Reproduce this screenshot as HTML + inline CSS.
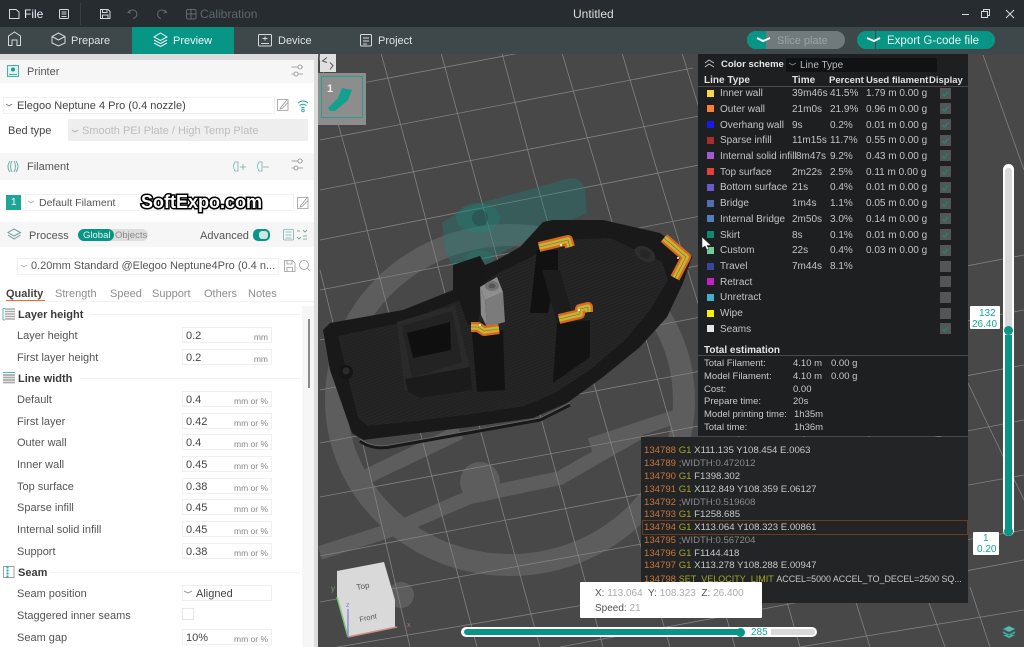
<!DOCTYPE html>
<html><head><meta charset="utf-8"><style>
html,body{margin:0;padding:0;background:#494949}
#r{position:relative;width:1024px;height:647px;overflow:hidden;font-family:"Liberation Sans",sans-serif;font-size:11px;color:#333}
#r div,#r span.t{position:absolute;white-space:nowrap}
.t{line-height:14px;height:14px;margin-top:1px}
.l{color:#555;font-size:11px;margin-top:2px}
.b{position:absolute;left:182px;width:88px;height:14px;margin-top:1px;background:#fff;border:1px solid #f0f0f0}
.v{color:#444;font-size:11px;left:186px;margin-top:2px}
.u{color:#888;font-size:8.500px;right:756px;margin-top:2px}
.sec{font-weight:bold;color:#3a3a3a;font-size:11px;left:18px;margin-top:2px}
.hl{height:1px;background:#f2f2f2}
.lg{color:#c4c4c4;font-size:10px;margin-top:2px}
.w{color:#c9c9c9;font-size:9.500px;margin-top:2px}
.g{font-size:9.600px;color:#c8c8c8;margin-top:2px}
.cb{left:940px;width:11px;height:11px;background:#555}
.sw{left:707px;width:7px;height:7px}
.o{color:#c8763a}.y{color:#a5a52a}.d{color:#8a8a8a}
svg{position:absolute;overflow:visible}
</style></head><body><div id="r">

<!-- viewport -->
<svg style="left:0;top:0" width="1024" height="647" viewBox="0 0 1024 647">
<defs><pattern id="h" width="3" height="3" patternUnits="userSpaceOnUse" patternTransform="rotate(68)"><rect width="3" height="3" fill="#222"/><rect width="1" height="3" fill="#272727"/></pattern></defs>
<rect x="316" y="54" width="708" height="593" fill="#484848"/>
<g fill="none" stroke="#5d5d5d">
<ellipse cx="510" cy="400" rx="174" ry="165" stroke-width="22"/>
<path d="M320 553 L400 527 L470 497 L560 478 L640 432" stroke-width="14"/>
<path d="M355 482 L460 432" stroke-width="15"/>
<path d="M590 445 L690 412" stroke-width="14"/>
</g>
<circle cx="480" cy="482" r="20" fill="#5d5d5d"/>
<circle cx="401" cy="595" r="13" fill="#5d5d5d"/>
<g stroke="#828282" stroke-width=".8" fill="none">
<path d="M320 91 L520 53M320 140 L693 68M320 190 L740 108M320 240 L800 145M320 290 L860 185M320 340 L920 222M320 390 L1024 255M320 443 L1024 310M320 497 L1024 365M320 556 L1024 420M320 602 L1024 475M320 650 L1024 530M560 647 L1024 560M800 647 L1024 610"/>
<path d="M318 53 L354 180 L423 443 L477 647"/>
<path d="M320 270 L362 440 L410 647"/>
<path d="M381 53 L413 170 L483 440 L540 647"/>
<path d="M441 53 L473 170 L547 440 L603 647"/>
<path d="M502 53 L533 170 L610 440 L670 647"/>
<path d="M562 53 L597 170 L675 440 L735 647"/>
<path d="M622 53 L657 170 L740 440 L800 647"/>
<path d="M682 53 L718 170 L805 440 L870 647"/>
<path d="M745 53 L780 170 L870 440 L945 647"/>
<path d="M983 55 L1024 170"/><path d="M968 383 L1024 500"/><path d="M970 587 L990 647"/>
</g>
<!-- ghost -->
<path d="M442 223 L467 207 L570 178 Q582 178 585 190 L587 213 L527 240 L487 260 L453 267 L445 250Z" fill="rgba(25,135,125,.33)"/>
<ellipse cx="478" cy="218" rx="22" ry="15" fill="rgba(25,135,125,.3)"/>
<circle cx="480" cy="218" r="8" fill="rgba(40,70,70,.5)"/>
<ellipse cx="480" cy="258" rx="14" ry="8" fill="rgba(25,135,125,.25)"/>
<!-- skirt -->
<path d="M360 441 Q372 450 390 447 L540 420 L570 405" fill="none" stroke="#191919" stroke-width="3"/>
<path d="M360 439 Q372 448 390 445 L540 418 L570 403" fill="none" stroke="#6a6a6a" stroke-width=".8"/>
<!-- boat -->
<path d="M323 330 L330 323 L403 310 L453 290 L453 265 L480 256 L485 265 L497 260 L520 247 L543 222 L553 220 L603 220 L660 233 L692 257 L683 283 L667 317 L640 347 L603 377 L567 403 L533 418 L470 427 L420 433 L363 440 L352 433 L330 370Z" fill="#191919"/>
<path d="M338 336 L405 322 L460 300 L500 272 L530 258 L560 240 L610 238 L662 262 L668 280 L650 310 L625 340 L590 370 L555 393 L525 406 L465 415 L415 421 L368 426 L358 418Z" fill="url(#h)"/>
<!-- square recess -->
<path d="M397 322 L455 305 L470 370 L415 395 L405 390Z" fill="#2a2a2a"/>
<path d="M402 326 L452 311 L462 362 L412 378Z" fill="#232323"/>
<path d="M407 333 L450 322 L451 350 L413 358Z" fill="#0f0f0f"/>
<path d="M405 379 L470 367 L472 390 L420 398 L408 392Z" fill="#1b1b1b"/>
<circle cx="346" cy="372" r="7" fill="#151515"/><circle cx="346" cy="371" r="3.500" fill="#2b2b2b"/>
<ellipse cx="645" cy="254" rx="11" ry="7" fill="#2e2e2e" transform="rotate(30 645 254)"/><ellipse cx="645" cy="254" rx="6" ry="4" fill="#262626" transform="rotate(30 645 254)"/>
<!-- walls -->
<path d="M453 265 L480 256 L486 280 L480 310 L478 325 L468 325 L459 300Z" fill="#181818"/>
<path d="M472 333 L503 330 L505 390 L477 392Z" fill="#131313"/>
<path d="M537 250 L558 250 L558 270 L548 313 L530 313Z" fill="#111"/>
<path d="M542 270 L560 270 L573 317 L557 323Z" fill="#1c1c1c"/>
<path d="M557 323 L590 320 L590 357 L553 383Z" fill="#131313"/>
<!-- nozzle post -->
<path d="M480 287 L485 300 L487 327 L481 315Z" fill="#8a8a8a"/>
<path d="M485 300 L503 292 L505 322 L487 327Z" fill="#7b7b7b"/>
<path d="M480 287 L497 277 L503 292 L485 300Z" fill="#8e8e8e"/>
<ellipse cx="492" cy="286" rx="7" ry="5" fill="#727272"/><ellipse cx="492" cy="286" rx="3.500" ry="2.500" fill="#555"/>
<!-- orange -->
<g fill="none" stroke-linejoin="round">
<g stroke="#d9691e" stroke-width="10"><path d="M539 247 L568 240 L570 247"/><path d="M559 319 L580 314 L580 309 L588 307 L588 312"/><path d="M471 327 L478 327 L484 331 L499 329"/><path d="M664 238 L686 257 L675 278"/></g>
<g stroke="#c9b23a" stroke-width="5.500"><path d="M539 247 L568 240 L570 247"/><path d="M559 319 L580 314 L580 309 L588 307 L588 312"/><path d="M471 327 L478 327 L484 331 L499 329"/><path d="M664 238 L686 257 L675 278"/></g>
<g stroke="#7a7020" stroke-width=".6"><path d="M539 247 L568 240 L570 247"/><path d="M559 319 L580 314 L580 309 L588 307 L588 312"/><path d="M471 327 L478 327 L484 331 L499 329"/><path d="M664 238 L686 257 L675 278"/></g>
</g>
<g fill="#fff"><circle cx="561" cy="245" r="1"/><circle cx="579" cy="310" r="1"/><circle cx="480" cy="325" r="1"/><circle cx="678" cy="258" r="1"/></g>
<!-- thumb -->
<rect x="316" y="73" width="50" height="52" fill="#8d8d8d"/>
<rect x="321.500" y="76.500" width="41" height="41" fill="none" stroke="#2c9c90"/>
<path d="M328 108 L338 98 L342 88 L352 90 L348 100 L335 111 L330 111Z" fill="#14a08f"/>
<!-- cube -->
<path d="M337 571 L384 562 L395 600 L395 627 L348 637 L337 597Z" fill="#d9d9d9"/>
<path d="M337 597 L348 637" stroke="#7ac57a" stroke-width="1.500"/>
<path d="M348 637 L397 627" stroke="#c98a85" stroke-width="1.500"/>
<path d="M348 637 L348 609" stroke="#7f82d8" stroke-width="1.200"/>
<text x="357" y="590" font-size="8" fill="#555" transform="rotate(-10 357 590)" font-family="Liberation Sans">Top</text>
<text x="360" y="622" font-size="7.500" fill="#555" transform="rotate(-12 360 622)" font-family="Liberation Sans">Front</text>
<text x="331" y="591" font-size="8" fill="#5fa65f" font-family="Liberation Sans">y</text>
<text x="346" y="607" font-size="7" fill="#7f82d8" font-family="Liberation Sans">z</text>
<text x="407" y="627" font-size="7" fill="#a86f6b" font-family="Liberation Sans">x</text>
</svg>
<div style="left:320px;top:54px;width:16px;height:18px;background:#e0e0e0"></div>
<svg style="left:320px;top:54px" width="16" height="18"><path d="M7 4 L2.500 7.500 L7 9M10 9 L13 12 L10 16" transform="translate(0,-.5)" fill="none" stroke="#555" stroke-width="1"/></svg>
<span class="t" style="left:327px;top:81px;color:#eee;font-weight:bold;font-size:11px">1</span>

<!-- top bars -->
<div style="left:0;top:0;width:1024px;height:27px;background:#262c2f"></div>
<div style="left:0;top:27px;width:1024px;height:27px;background:#3e4749"></div>
<div style="left:132px;top:27px;width:102px;height:27px;background:#079686"></div>
<div style="left:80px;top:3px;width:1px;height:22px;background:#3a4144"></div>
<span class="t" style="left:24px;top:6px;color:#eef;font-size:12px">File</span>
<span class="t" style="left:200px;top:6px;color:#5e686a;font-size:12px">Calibration</span>
<span class="t" style="left:573px;top:6px;color:#ddd;font-size:12px">Untitled</span>
<svg style="left:0;top:0" width="1024" height="54" fill="none" stroke="#d5d9da" stroke-width="1">
<path d="M9.500 9.500 H16 L19 12 V18.500 H9.500Z"/>
<rect x="59.500" y="9.500" width="9" height="9" rx="1"/><path d="M61.500 12 H66.500M61.500 14 H66.500M61.500 16.500 H66.500"/>
<path d="M100.500 9.500 H108 L110 11.500 V18.500 H100.500ZM102.500 9.500 V12.500 H107 V9.500M102.500 18.500 V15 H108 V18.500"/>
<path stroke="#616b6d" d="M130 10 L128 12.500 L131 13M128.500 12 Q133 8 136.500 12 Q138 17 133 18.500"/>
<path stroke="#616b6d" d="M165 10 L166.500 12.500 L163.500 13M166 12 Q161 8 158 12 Q156.500 17 161 18.500"/>
<rect stroke="#616b6d" x="186.500" y="9.500" width="9.500" height="9.500" rx="1.500"/><path stroke="#616b6d" d="M191 9.500 V19M186.500 14 H196"/>
<path d="M8.500 36 L14.500 32 L20.500 36 V45.500 H17 V40 H12 V45.500 H8.500Z"/>
<path d="M58.500 33 L65 36.500 V43 L58.500 46 L52 43 V36.500ZM52 36.500 L58.500 40 L65 36.500"/>
<path stroke="#e6f5f3" d="M160.500 33 L167 37 L160.500 40.500 L154 37ZM154 40 L160.500 43.500 L167 40M154 43 L160.500 46.500 L167 43"/>
<rect x="258.500" y="34.500" width="13" height="11.500" rx="1"/><path d="M265 36.500 V40.500M262.500 38.500 H267.500M261 43.500 H269"/>
<rect x="360.500" y="34.500" width="11" height="11.500" rx="1"/><path d="M363 38 H369M363 41 H369M363 44 H367"/>
<path d="M962 14.500 H969" stroke="#ddd"/>
<path d="M981.500 11.500 H987.500 V17.500 H981.500ZM983.500 11.500 V9.500 H989.500 V15.500 H987.500"/>
<path d="M1006 10 L1014 18M1014 10 L1006 18"/>
</svg>
<span class="t" style="left:71px;top:33px;color:#dfe3e4;font-size:11px">Prepare</span>
<span class="t" style="left:173px;top:33px;color:#eafafa;font-size:11px">Preview</span>
<span class="t" style="left:278px;top:33px;color:#dfe3e4;font-size:11px">Device</span>
<span class="t" style="left:378px;top:33px;color:#dfe3e4;font-size:11px">Project</span>

<!-- buttons -->
<div style="left:747px;top:31px;width:98px;height:18px;border-radius:9px;background:#707a7c;overflow:hidden"><div style="left:0;top:0;width:19px;height:18px;background:#079686"></div></div>
<span class="t" style="left:777px;top:33px;color:#9ba3a5;font-size:11px">Slice plate</span>
<div style="left:857px;top:31px;width:138px;height:18px;border-radius:9px;background:#079686"></div>
<div style="left:875px;top:31px;width:1px;height:18px;background:#3e4749"></div>
<span class="t" style="left:887px;top:33px;color:#e6f5f3;font-size:11.500px">Export G-code file</span>
<svg style="left:740px;top:31px" width="150" height="18" fill="none" stroke="#fff" stroke-width="2"><path d="M17 7 L23 10 L30 7"/><path d="M128 7 L135 10 L141 7" transform="translate(-1,0)"/></svg>

<!-- sidebar -->
<div style="left:0;top:54px;width:318px;height:593px;background:#dcdcdc"></div>
<div style="left:0;top:60px;width:314px;height:587px;background:#fff"></div>
<div style="left:0;top:60px;width:314px;height:23px;background:#f6f6f6"></div>
<div style="left:0;top:153px;width:314px;height:27px;background:#f6f6f6"></div>
<div style="left:0;top:222px;width:314px;height:25px;background:#f6f6f6"></div>
<span class="t" style="left:27px;top:63.500px;color:#555;font-size:11px">Printer</span>
<span class="t" style="left:27px;top:159px;color:#555;font-size:11px">Filament</span>
<span class="t" style="left:29px;top:228px;color:#555;font-size:11px">Process</span>
<svg style="left:0;top:54px" width="318" height="300" fill="none" stroke="#8a8a8a" stroke-width=".8">
<rect x="7.500" y="11.500" width="11" height="11" stroke="#1d9f90" fill="#dff1ee"/><path d="M9 20.500 H17" stroke="#1d9f90"/><circle cx="13" cy="15.500" r="2" fill="#1d9f90" stroke="none"/>
<path d="M291.500 13 H303M291.500 20 H303"/><circle cx="300" cy="13" r="2" fill="#fff"/><circle cx="296" cy="20" r="2" fill="#fff"/>
<path d="M291.500 107 H303M291.500 114 H303"/><circle cx="300" cy="107" r="2" fill="#fff"/><circle cx="296" cy="114" r="2" fill="#fff"/>
<path stroke="#6fb2aa" d="M235 108 Q232 112 235 117 H238 V108ZM240 113 H246M243 110 V116"/>
<path stroke="#6fb2aa" d="M259 108 Q256 112 259 117 H262 V108ZM263 113 H269"/>
<path stroke="#6fb2aa" d="M10 107 Q6 112.500 10 118 M12 107 Q9 112.500 12 118M14 107 Q17 112.500 14 118M16 107 Q20 112.500 16 118" stroke-width="1"/>
<path stroke="#6e9f9a" d="M14 175 L20.500 178.500 L14 182 L8 178.500ZM8 181 L14 185 L20.500 181" stroke-width="1"/>
<path stroke="#9a9a9a" d="M277.500 45.500 H288 V56.500 H277.500ZM287 46 L281 53 L280 55 L282 54.500 L288.500 48"/>
<path stroke="#9a9a9a" d="M297.500 143.500 H308 V154.500 H297.500ZM307 144 L301 151 L300 153 L302 152.500 L308.500 146"/>
<path d="M298 49 Q303 45 308 49M299.500 51.500 Q303 49 306.500 51.500M301.500 54 Q303 53 304.500 54" stroke="#1aa594" stroke-width="1"/><circle cx="303" cy="56.500" r="1.300" stroke="#1aa594"/>
<path d="M6 50 L9 52 L12 50" stroke="#777"/>
</svg>
<div style="left:3px;top:97px;width:270px;height:15px;border:1px solid #f1f1f1"></div>
<span class="t" style="left:17px;top:98px;font-size:11px;color:#444">Elegoo Neptune 4 Pro (0.4 nozzle)</span>
<span class="t" style="left:8px;top:123px;font-size:11px;color:#444">Bed type</span>
<div style="left:68px;top:119px;width:240px;height:22px;background:#eeeeee"></div>
<span class="t" style="left:82px;top:123px;font-size:11px;color:#bdbdbd">Smooth PEI Plate / High Temp Plate</span>
<div style="left:6px;top:195px;width:15px;height:15px;background:#1fa597"></div>
<span class="t" style="left:11px;top:195px;font-size:10px;color:#fff">1</span>
<div style="left:25px;top:194px;width:267px;height:15px;border:1px solid #f1f1f1"></div>
<span class="t" style="left:39px;top:195px;font-size:10.500px;color:#555">Default Filament</span>
<svg style="left:0;top:0" width="318" height="300" fill="none" stroke="#aaa" stroke-width=".8"><path d="M72 130 L75 132 L78 130M28 201 L31 203 L34 201M21 265 L24 267 L27 265"/></svg>
<!-- process row -->
<div style="left:78px;top:229px;width:70px;height:12px;border-radius:6px;background:#ddd"></div>
<div style="left:78px;top:229px;width:36px;height:12px;border-radius:6px;background:#079686"></div>
<span class="t" style="left:83px;top:227.500px;font-size:9.500px;color:#e8f5f3">Global</span>
<span class="t" style="left:115px;top:227.500px;font-size:9.500px;color:#8a8a8a">Objects</span>
<span class="t" style="left:200px;top:227.500px;font-size:11px;color:#555">Advanced</span>
<div style="left:253px;top:229px;width:17px;height:12px;border-radius:5px;background:#079686"></div>
<div style="left:259px;top:231px;width:9px;height:8px;border-radius:3px;background:#cfe5e2"></div>
<svg style="left:282px;top:228px" width="28" height="14" fill="none" stroke="#6fb2aa" stroke-width=".8"><rect x="1.500" y="1.500" width="10" height="10.500" rx="1"/><path d="M3.500 4 H9.500M3.500 7 H9.500M3.500 10 H9.500"/><path d="M15 3 H18M21 2 L23 4 L25 2M15 9 L17 11 L19 9M21 8 H25M21 11 H25" stroke="#6a8f8b"/></svg>
<div style="left:17px;top:258px;width:260px;height:15px;border:1px solid #f1f1f1"></div>
<span class="t" style="left:31px;top:258px;font-size:11px;color:#555">0.20mm Standard @Elegoo Neptune4Pro (0.4 n...</span>
<svg style="left:282px;top:258px" width="30" height="16" fill="none" stroke="#9a9a9a" stroke-width=".8"><path d="M2.500 2.500 H10.500 L13 5 V13.500 H2.500ZM5 2.500 V6 H10 V2.500M5 13.500 V9.500 H10.500 V13.500"/><circle cx="22" cy="7" r="4.500"/><path d="M25.500 10.500 L28 13"/></svg>
<span class="t" style="left:6px;top:285.500px;font-size:11px;font-weight:bold;color:#444">Quality</span>
<div style="left:6px;top:300px;width:39px;height:1px;background:#e2703a"></div>
<span class="t" style="left:55px;top:285.500px;font-size:11px;color:#8e8e8e">Strength</span>
<span class="t" style="left:110px;top:285.500px;font-size:11px;color:#8e8e8e">Speed</span>
<span class="t" style="left:152px;top:285.500px;font-size:11px;color:#8e8e8e">Support</span>
<span class="t" style="left:204px;top:285.500px;font-size:11px;color:#8e8e8e">Others</span>
<span class="t" style="left:248px;top:285.500px;font-size:11px;color:#8e8e8e">Notes</span>
<div class="hl" style="left:0;top:301px;width:314px"></div>
<div style="left:302px;top:306px;width:12px;height:341px;background:#f6f6f6"></div>
<div style="left:308px;top:319px;width:2px;height:69px;background:#8a8a8a"></div>

<span class="t sec" style="top:306px">Layer height</span><div class="hl" style="left:90px;top:314px;width:210px"></div>
<span class="t sec" style="top:370px">Line width</span><div class="hl" style="left:80px;top:378px;width:220px"></div>
<span class="t sec" style="top:564px">Seam</span><div class="hl" style="left:50px;top:572px;width:250px"></div>
<svg style="left:0;top:300px" width="20" height="290" fill="none">
<path d="M3 8.500 V20M3 8.500 H5M3 20 H5" stroke="#2aa" stroke-width=".8"/><path d="M5 9 H15M5 11.500 H15M5 14 H15M5 16.500 H15M5 19 H15" stroke="#aaa" stroke-width="1.500"/>
<path d="M3 72.500 H15" stroke="#2aa" stroke-width=".8"/><path d="M3 75 H15M3 77.500 H15M3 80 H15M3 82.500 H15" stroke="#aaa" stroke-width="1.800"/>
<rect x="3.500" y="266.500" width="10.500" height="11" stroke="#888" stroke-width=".8"/><path d="M7.500 266.500 V277.500" stroke="#2aa" stroke-width="2" stroke-dasharray="2 1"/>
</svg>

<!-- rows -->
<span class="t l" style="left:17px;top:327px">Layer height</span><i class="b" style="top:326px"></i><span class="t v" style="top:327px">0.2</span><span class="t u" style="top:328px">mm</span>
<span class="t l" style="left:17px;top:349px">First layer height</span><i class="b" style="top:348px"></i><span class="t v" style="top:349px">0.2</span><span class="t u" style="top:350px">mm</span>
<span class="t l" style="left:17px;top:391px">Default</span><i class="b" style="top:390px"></i><span class="t v" style="top:391px">0.4</span><span class="t u" style="top:392px">mm or %</span>
<span class="t l" style="left:17px;top:413px">First layer</span><i class="b" style="top:412px"></i><span class="t v" style="top:413px">0.42</span><span class="t u" style="top:414px">mm or %</span>
<span class="t l" style="left:17px;top:434px">Outer wall</span><i class="b" style="top:433px"></i><span class="t v" style="top:434px">0.4</span><span class="t u" style="top:435px">mm or %</span>
<span class="t l" style="left:17px;top:456px">Inner wall</span><i class="b" style="top:455px"></i><span class="t v" style="top:456px">0.45</span><span class="t u" style="top:457px">mm or %</span>
<span class="t l" style="left:17px;top:478px">Top surface</span><i class="b" style="top:477px"></i><span class="t v" style="top:478px">0.38</span><span class="t u" style="top:479px">mm or %</span>
<span class="t l" style="left:17px;top:499px">Sparse infill</span><i class="b" style="top:498px"></i><span class="t v" style="top:499px">0.45</span><span class="t u" style="top:500px">mm or %</span>
<span class="t l" style="left:17px;top:521px">Internal solid infill</span><i class="b" style="top:520px"></i><span class="t v" style="top:521px">0.45</span><span class="t u" style="top:522px">mm or %</span>
<span class="t l" style="left:17px;top:543px">Support</span><i class="b" style="top:542px"></i><span class="t v" style="top:543px">0.38</span><span class="t u" style="top:544px">mm or %</span>
<span class="t l" style="left:17px;top:585px">Seam position</span><i class="b" style="top:584px"></i><span class="t v" style="left:196px;top:585px">Aligned</span>
<svg style="left:184px;top:590px" width="10" height="6" fill="none" stroke="#888" stroke-width=".8"><path d="M0 1 L4 3 L8 1"/></svg>
<span class="t l" style="left:17px;top:607px">Staggered inner seams</span><div style="left:182px;top:608px;width:10px;height:10px;border:1px solid #e6e6e6"></div>
<span class="t l" style="left:17px;top:629px">Seam gap</span><i class="b" style="top:628px"></i><span class="t v" style="top:629px">10%</span><span class="t u" style="top:630px">mm or %</span>

<!-- legend -->
<div style="left:698px;top:54px;width:270px;height:382px;background:#1e1f20"></div>
<div style="left:641px;top:437px;width:327px;height:166px;background:#232425"></div>
<svg style="left:704px;top:58px" width="14" height="12" fill="none" stroke="#ccc" stroke-width=".9"><path d="M1 5 L5 2 L10 5M1 9 L5 6 L10 9"/></svg>
<span class="t" style="left:721px;top:56.500px;font-size:9.500px;font-weight:bold;color:#e6e6e6">Color scheme</span>
<div style="left:786px;top:58px;width:151px;height:14px;background:#111213"></div>
<span class="t" style="left:800px;top:57.500px;font-size:10px;color:#bbb">Line Type</span>
<svg style="left:789px;top:62px" width="10" height="6" fill="none" stroke="#888" stroke-width=".8"><path d="M0 1 L3.500 3 L7 1"/></svg>
<span class="t" style="left:704px;top:73px;font-size:10px;font-weight:bold;color:#e0e0e0">Line Type</span>
<span class="t" style="left:792px;top:73px;font-size:10px;font-weight:bold;color:#e0e0e0">Time</span>
<span class="t" style="left:829px;top:73px;font-size:9.500px;font-weight:bold;color:#e0e0e0">Percent</span>
<span class="t" style="left:866px;top:73px;font-size:9.500px;font-weight:bold;color:#e0e0e0">Used filament</span>
<span class="t" style="left:929px;top:73px;font-size:9.500px;font-weight:bold;color:#e0e0e0">Display</span>
<div style="left:698px;top:86px;width:270px;height:1px;background:#4a4a4a"></div>

<div class="sw" style="top:90px;background:#f5d94a"></div><span class="t lg" style="left:720px;top:85px">Inner wall</span><span class="t lg" style="left:792px;top:85px">39m46s</span><span class="t lg" style="left:830px;top:85px">41.5%</span><span class="t lg" style="left:866px;top:85px">1.79 m 0.00 g</span>
<div class="sw" style="top:105px;background:#f5813a"></div><span class="t lg" style="left:720px;top:101px">Outer wall</span><span class="t lg" style="left:792px;top:101px">21m0s</span><span class="t lg" style="left:830px;top:101px">21.9%</span><span class="t lg" style="left:866px;top:101px">0.96 m 0.00 g</span>
<div class="sw" style="top:121px;background:#1a1ae6"></div><span class="t lg" style="left:720px;top:116.500px">Overhang wall</span><span class="t lg" style="left:792px;top:116.500px">9s</span><span class="t lg" style="left:830px;top:116.500px">0.2%</span><span class="t lg" style="left:866px;top:116.500px">0.01 m 0.00 g</span>
<div class="sw" style="top:137px;background:#a82d2d"></div><span class="t lg" style="left:720px;top:132px">Sparse infill</span><span class="t lg" style="left:792px;top:132px">11m15s</span><span class="t lg" style="left:830px;top:132px">11.7%</span><span class="t lg" style="left:866px;top:132px">0.55 m 0.00 g</span>
<div class="sw" style="top:152px;background:#a25ad0"></div><span class="t lg" style="left:720px;top:148px">Internal solid infill</span><span class="t lg" style="left:796px;top:148px">8m47s</span><span class="t lg" style="left:830px;top:148px">9.2%</span><span class="t lg" style="left:866px;top:148px">0.43 m 0.00 g</span>
<div class="sw" style="top:168px;background:#e63d3d"></div><span class="t lg" style="left:720px;top:163.500px">Top surface</span><span class="t lg" style="left:792px;top:163.500px">2m22s</span><span class="t lg" style="left:830px;top:163.500px">2.5%</span><span class="t lg" style="left:866px;top:163.500px">0.11 m 0.00 g</span>
<div class="sw" style="top:184px;background:#6a5acb"></div><span class="t lg" style="left:720px;top:179px">Bottom surface</span><span class="t lg" style="left:792px;top:179px">21s</span><span class="t lg" style="left:830px;top:179px">0.4%</span><span class="t lg" style="left:866px;top:179px">0.01 m 0.00 g</span>
<div class="sw" style="top:200px;background:#4f6fb0"></div><span class="t lg" style="left:720px;top:195px">Bridge</span><span class="t lg" style="left:792px;top:195px">1m4s</span><span class="t lg" style="left:830px;top:195px">1.1%</span><span class="t lg" style="left:866px;top:195px">0.05 m 0.00 g</span>
<div class="sw" style="top:215px;background:#4f7fc0"></div><span class="t lg" style="left:720px;top:210.500px">Internal Bridge</span><span class="t lg" style="left:792px;top:210.500px">2m50s</span><span class="t lg" style="left:830px;top:210.500px">3.0%</span><span class="t lg" style="left:866px;top:210.500px">0.14 m 0.00 g</span>
<div class="sw" style="top:231px;background:#0b8a72"></div><span class="t lg" style="left:720px;top:226.500px">Skirt</span><span class="t lg" style="left:792px;top:226.500px">8s</span><span class="t lg" style="left:830px;top:226.500px">0.1%</span><span class="t lg" style="left:866px;top:226.500px">0.01 m 0.00 g</span>
<div class="sw" style="top:247px;background:#6fcf97"></div><span class="t lg" style="left:720px;top:242px">Custom</span><span class="t lg" style="left:792px;top:242px">22s</span><span class="t lg" style="left:830px;top:242px">0.4%</span><span class="t lg" style="left:866px;top:242px">0.03 m 0.00 g</span>
<div class="sw" style="top:263px;background:#38479e"></div><span class="t lg" style="left:720px;top:258px">Travel</span><span class="t lg" style="left:792px;top:258px">7m44s</span><span class="t lg" style="left:830px;top:258px">8.1%</span>
<div class="sw" style="top:278px;background:#c81ec8"></div><span class="t lg" style="left:720px;top:273.500px">Retract</span>
<div class="sw" style="top:294px;background:#45aecf"></div><span class="t lg" style="left:720px;top:289px">Unretract</span>
<div class="sw" style="top:310px;background:#f5f000"></div><span class="t lg" style="left:720px;top:305px">Wipe</span>
<div class="sw" style="top:325px;background:#e6e6e6"></div><span class="t lg" style="left:720px;top:320.500px">Seams</span>

<div class="cb" style="top:88px"></div><div class="cb" style="top:103px"></div><div class="cb" style="top:119px"></div><div class="cb" style="top:135px"></div><div class="cb" style="top:150px"></div><div class="cb" style="top:166px"></div><div class="cb" style="top:182px"></div><div class="cb" style="top:198px"></div><div class="cb" style="top:213px"></div><div class="cb" style="top:229px"></div><div class="cb" style="top:245px"></div><div class="cb" style="top:261px"></div><div class="cb" style="top:276px"></div><div class="cb" style="top:292px"></div><div class="cb" style="top:308px"></div><div class="cb" style="top:323px"></div>
<svg style="left:940px;top:88px" width="11" height="250" fill="none" stroke="#0c8f80" stroke-width="1.200"><path d="M2.500 6 L4.500 8 L8.500 3.500"/><path d="M2.500 21 L4.500 23 L8.500 18.500M2.500 37 L4.500 39 L8.500 34.500M2.500 53 L4.500 55 L8.500 50.500M2.500 68 L4.500 70 L8.500 65.500M2.500 84 L4.500 86 L8.500 81.500M2.500 100 L4.500 102 L8.500 97.500M2.500 116 L4.500 118 L8.500 113.500M2.500 131 L4.500 133 L8.500 128.500M2.500 147 L4.500 149 L8.500 144.500M2.500 163 L4.500 165 L8.500 160.500M2.500 241 L4.500 243 L8.500 238.500"/></svg>

<span class="t" style="left:704px;top:342.500px;font-size:10px;font-weight:bold;color:#e6e6e6">Total estimation</span>
<div style="left:698px;top:355px;width:270px;height:1px;background:#4a4a4a"></div>
<span class="t w" style="left:704px;top:355px">Total Filament:</span><span class="t w" style="left:793px;top:355px">4.10 m</span><span class="t w" style="left:831px;top:355px">0.00 g</span>
<span class="t w" style="left:704px;top:368px">Model Filament:</span><span class="t w" style="left:793px;top:368px">4.10 m</span><span class="t w" style="left:831px;top:368px">0.00 g</span>
<span class="t w" style="left:704px;top:380.500px">Cost:</span><span class="t w" style="left:793px;top:380.500px">0.00</span>
<span class="t w" style="left:704px;top:393px">Prepare time:</span><span class="t w" style="left:793px;top:393px">20s</span>
<span class="t w" style="left:704px;top:406px">Model printing time:</span><span class="t w" style="left:794px;top:406px">1h35m</span>
<span class="t w" style="left:704px;top:418.500px">Total time:</span><span class="t w" style="left:794px;top:418.500px">1h36m</span>

<!-- gcode -->
<div style="left:642px;top:520px;width:324px;height:13px;border:1px solid #6a3a22"></div>
<span class="t g" style="left:644px;top:442px"><span class="o">134788</span> <span class="y">G1</span> X111.135 Y108.454 E.0063</span>
<span class="t g" style="left:644px;top:455px"><span class="o">134789</span> <span class="d">;WIDTH:0.472012</span></span>
<span class="t g" style="left:644px;top:468px"><span class="o">134790</span> <span class="y">G1</span> F1398.302</span>
<span class="t g" style="left:644px;top:480.500px"><span class="o">134791</span> <span class="y">G1</span> X112.849 Y108.359 E.06127</span>
<span class="t g" style="left:644px;top:493.500px"><span class="o">134792</span> <span class="d">;WIDTH:0.519608</span></span>
<span class="t g" style="left:644px;top:506px"><span class="o">134793</span> <span class="y">G1</span> F1258.685</span>
<span class="t g" style="left:644px;top:519px"><span class="o">134794</span> <span class="y">G1</span> X113.064 Y108.323 E.00861</span>
<span class="t g" style="left:644px;top:531.500px"><span class="o">134795</span> <span class="d">;WIDTH:0.567204</span></span>
<span class="t g" style="left:644px;top:544.500px"><span class="o">134796</span> <span class="y">G1</span> F1144.418</span>
<span class="t g" style="left:644px;top:557px"><span class="o">134797</span> <span class="y">G1</span> X113.278 Y108.288 E.00947</span>
<span class="t g" style="left:644px;top:570px"><span class="o">134798</span> <span class="y" style="font-size:9px">SET_VELOCITY_LIMIT</span> <span style="font-size:8.900px">ACCEL=5000 ACCEL_TO_DECEL=2500 SQ...</span></span>

<!-- tooltip -->
<div style="left:580px;top:582px;width:182px;height:36px;background:#fff;border-radius:1px"></div>
<span class="t" style="left:595px;top:586px;font-size:10px;color:#555">X: <span style="color:#aaa">113.064</span>&nbsp; Y: <span style="color:#aaa">108.323</span>&nbsp; Z: <span style="color:#aaa">26.400</span></span>
<span class="t" style="left:595px;top:601px;font-size:10px;color:#555">Speed: <span style="color:#aaa">21</span></span>

<!-- h slider -->
<div style="left:461px;top:627px;width:356px;height:10px;border-radius:5px;background:#fff"></div>
<div style="left:464px;top:629px;width:276px;height:6px;border-radius:3px 0 0 3px;background:#079686"></div>
<div style="left:771px;top:629px;width:44px;height:6px;border-radius:0 3px 3px 0;background:#d9d9d9"></div>
<div style="left:735.500px;top:627.500px;width:9px;height:9px;border-radius:50%;background:#079686"></div>
<span class="t" style="left:751px;top:625px;font-size:10px;color:#1aa594">285</span>

<!-- v slider -->
<div style="left:1003px;top:164px;width:11px;height:372px;border-radius:5.500px;background:#fff"></div>
<div style="left:1005px;top:168px;width:7px;height:162px;background:#d9d9d9;border-radius:3px 3px 0 0"></div>
<div style="left:1005px;top:335px;width:7px;height:196px;background:#079686"></div>
<div style="left:1004px;top:326px;width:9px;height:9px;border-radius:50%;background:#079686"></div>
<div style="left:1004px;top:526.500px;width:9px;height:9px;border-radius:50%;background:#079686"></div>
<div style="left:970px;top:306px;width:30px;height:23px;background:#fff;border-radius:1px"></div>
<span class="t" style="left:979px;top:305.500px;font-size:10px;color:#1aa594">132</span>
<span class="t" style="left:972px;top:316.500px;font-size:10px;color:#1aa594">26.40</span>
<div style="left:973px;top:532px;width:26px;height:23px;background:#fff;border-radius:1px"></div>
<span class="t" style="left:983px;top:531px;font-size:10px;color:#1aa594">1</span>
<span class="t" style="left:977px;top:541.500px;font-size:10px;color:#1aa594">0.20</span>
<svg style="left:1002px;top:625px" width="14" height="14" fill="#5fb5ab" stroke="#2b8f84" stroke-width=".6"><path d="M7 1 L13 4 L7 7 L1 4ZM1 6.500 L7 9.500 L13 6.500 V8 L7 11 L1 8ZM1 10 L7 13 L13 10"/></svg>

<!-- cursor -->
<svg style="left:701px;top:237px" width="12" height="16"><path d="M1 0 V11 L4 9 L6 13 L8 12 L6 8.500 L10 8.500Z" fill="#fff" stroke="#222" stroke-width=".5"/></svg>

<!-- watermark -->
<span class="t" style="left:141px;top:193px;font-size:18px;line-height:16px;height:16px;font-weight:bold;color:#fff;-webkit-text-stroke:3px #000;paint-order:stroke fill">SoftExpo.com</span>
</div></body></html>
